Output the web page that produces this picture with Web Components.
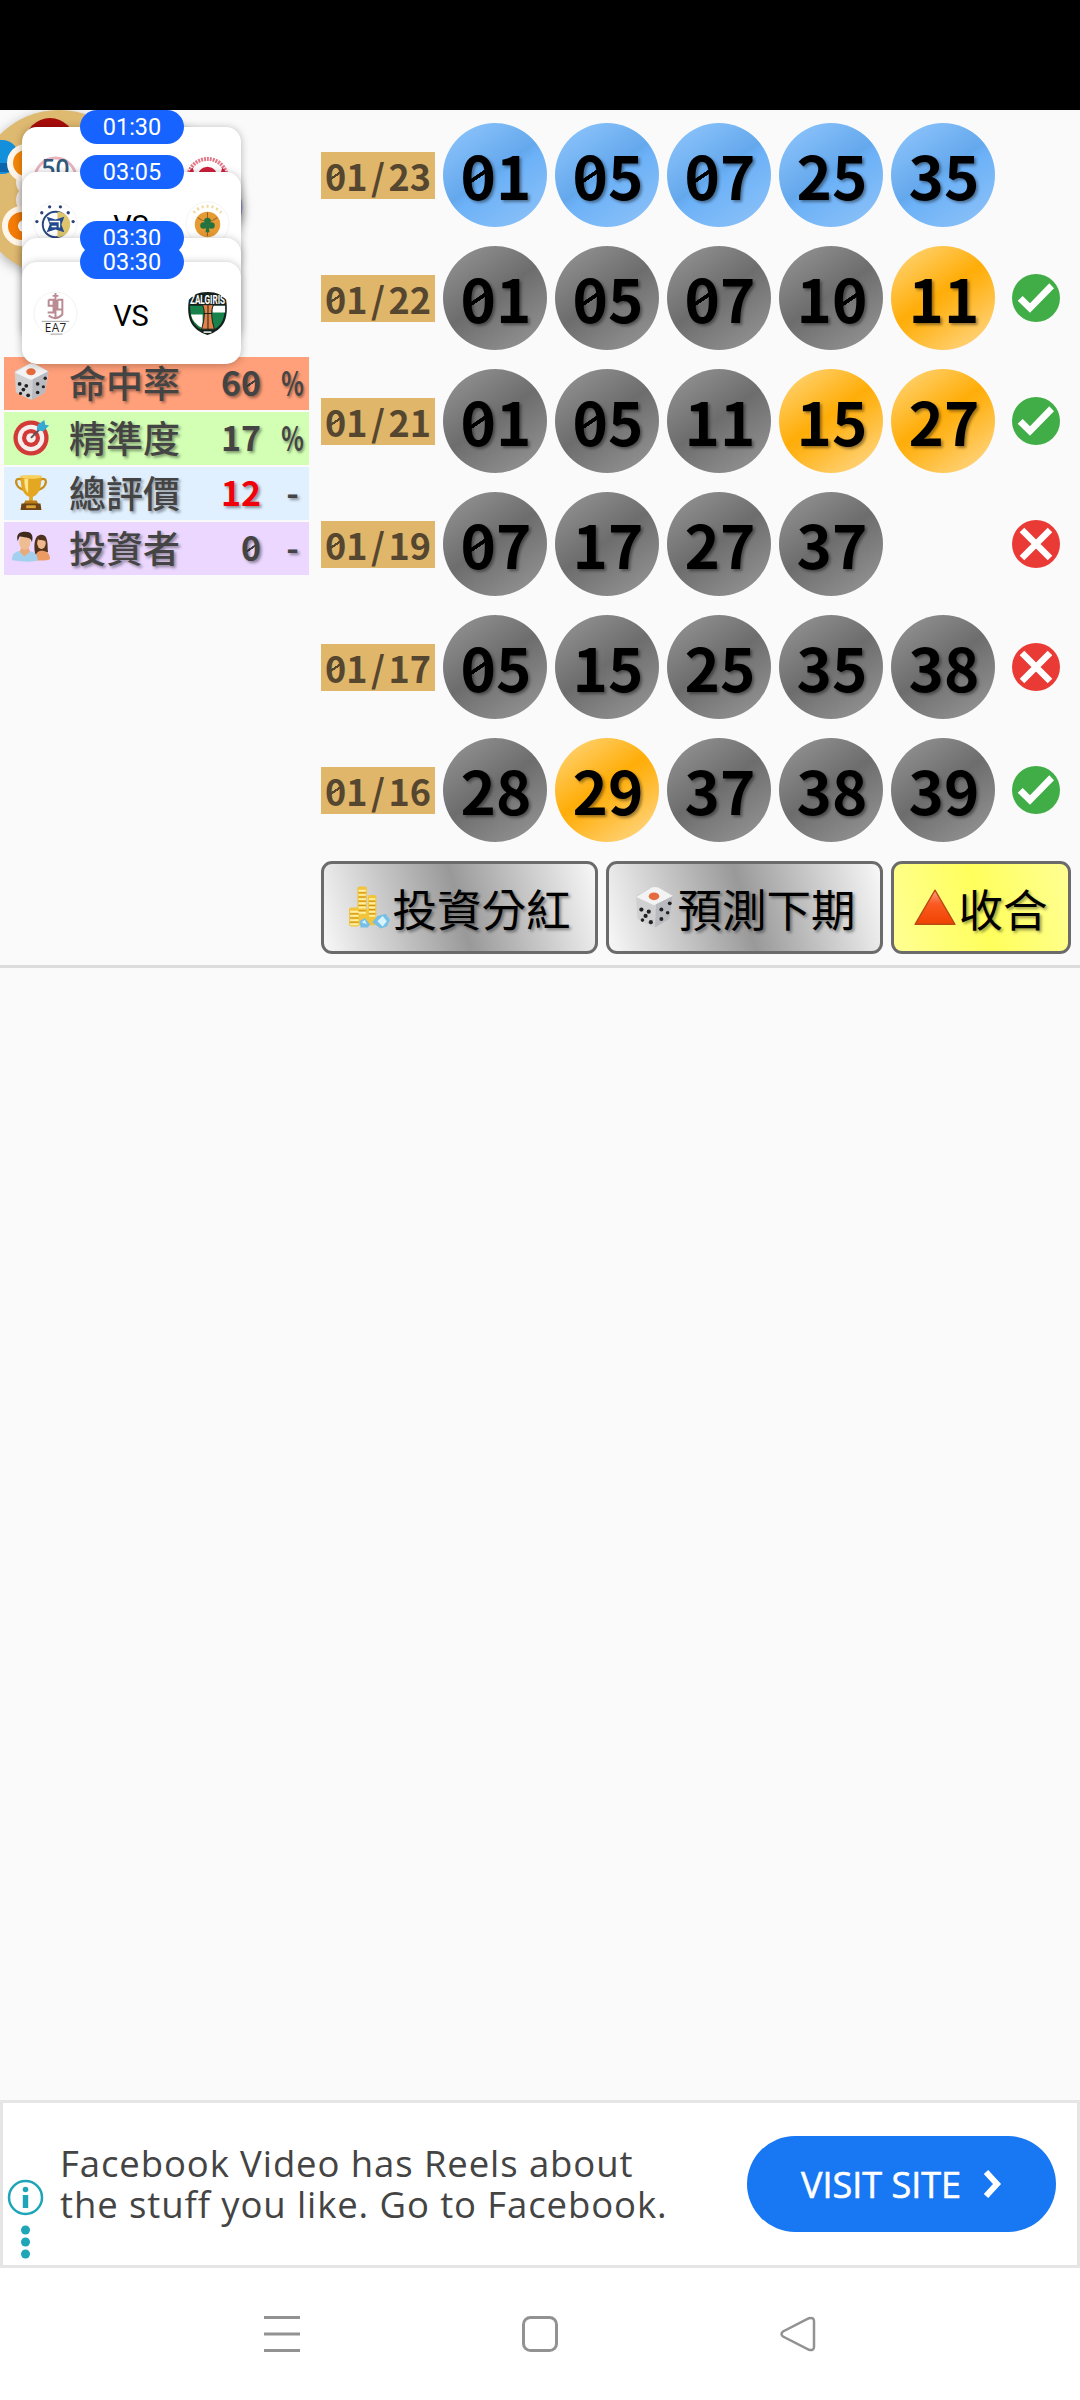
<!DOCTYPE html>
<html lang="zh-Hant">
<head>
<meta charset="utf-8">
<title>539</title>
<style>
body{
    margin:0;
    width:1080px;
    height:2400px;
    display:flex;
    flex-direction:column;
    background:#fafafa;
    overflow:hidden;
    font-family:"Noto Sans CJK TC","Noto Sans",sans-serif;
}
.status{
    height:110px;
    background:#000;
}
main{
    position:relative;
    height:855px;
    display:flex;
    gap:12px;
    border-bottom:3px solid #dcdcdc;
}
.stats{
    width:305px;
    padding:247px 0 0 4px;
    display:flex;
    flex-direction:column;
    gap:2px;
}
.draws{
    flex:1;
    padding:13px 9px 0 0;
    display:flex;
    flex-direction:column;
    gap:19px;
}
.buttons{
    display:flex;
    gap:8px;
}
.space{
    flex:1;
}
</style>
</head>
<body>
<div class="status"></div>
<main>
    <div class="stats">
        <stat-row icon="dice" label="命中率" value="60" unit="%" style="--bg:#ffa07a"></stat-row>
        <stat-row icon="target" label="精準度" value="17" unit="%" style="--bg:#d2ffb4"></stat-row>
        <stat-row icon="cup" label="總評價" value="12" unit="-" style="--bg:#e1f0ff;--num:#f00008"></stat-row>
        <stat-row icon="people" label="投資者" value="0" unit="-" style="--bg:#ebd7ff"></stat-row>
    </div>
    <div class="draws">
        <draw-row date="01/23" balls="01 05 07 25 35" next></draw-row>
        <draw-row date="01/22" balls="01 05 07 10 11*" result="ok"></draw-row>
        <draw-row date="01/21" balls="01 05 11 15* 27*" result="ok"></draw-row>
        <draw-row date="01/19" balls="07 17 27 37" result="no"></draw-row>
        <draw-row date="01/17" balls="05 15 25 35 38" result="no"></draw-row>
        <draw-row date="01/16" balls="28 29* 37 38 39" result="ok"></draw-row>
        <div class="buttons">
            <metal-button icon="coins" style="width:277px">投資分紅</metal-button>
            <metal-button icon="dice" style="width:277px">預測下期</metal-button>
            <metal-button icon="up" style="width:180px;--a:#ffff94;--b:#ffff5c">收合</metal-button>
        </div>
    </div>
    <float-stack></float-stack>
</main>
<div class="space"></div>
<ad-banner>
    Facebook Video has Reels about<br>the stuff you like. Go to Facebook.
    <span slot="action">VISIT SITE</span>
</ad-banner>
<nav-bar></nav-bar>

<script>
const icons={
    dice:`<svg viewBox="0 0 40 40">
        <path d="M3 10Q2 9 4 8L18 1Q21 0 24 1L37 8Q39 9 38 12L35 29Q35 31 33 32L22 38Q20 39 18 38L6 32Q4 31 4 29Z" fill="#d0d0d3"/>
        <path d="M3 10L18 1Q21 0 24 1L38 9L22 17Q20 18 18 17Z" fill="#f3f3f4"/>
        <path d="M22 17L38 9L35 29Q35 31 33 32L21 39Z" fill="#b9babf"/>
        <ellipse cx="20" cy="9.300" rx="5" ry="3.700" fill="#e56a3d"/>
        <g fill="#222"><circle cx="8" cy="22" r="2"/><circle cx="15" cy="24" r="2"/><circle cx="12" cy="28" r="2"/><circle cx="9" cy="32" r="1.700"/><circle cx="17" cy="34" r="2"/><circle cx="35" cy="16" r="1.800"/><circle cx="27" cy="22" r="1.900"/><circle cx="33" cy="25" r="1.700"/><circle cx="27" cy="31" r="1.900"/></g></svg>`,
    target:`<svg viewBox="0 0 40 40">
        <circle cx="20" cy="21" r="18.500" fill="#d23a38"/><circle cx="20" cy="21" r="14" fill="#f7eeee"/><circle cx="20" cy="21" r="9.500" fill="#d23a38"/><circle cx="20" cy="21" r="5" fill="#f7eeee"/>
        <path d="M20 21L31 10" stroke="#555" stroke-width="2"/>
        <path d="M26 13L27 7L34 2L35 7L39 8L33 14Z" fill="#35a9d0"/></svg>`,
    cup:`<svg viewBox="0 0 40 40">
        <path d="M10 7C2 3 2 15 13 18M30 7C38 3 38 15 27 18" fill="none" stroke="#c98f1b" stroke-width="2.500"/>
        <path d="M9 3H31C31 14 29 23 22 25V30H18V25C11 23 9 14 9 3Z" fill="#e3a722"/>
        <path d="M13 6C13 14 14 18 17 21L17 6Z" fill="#ffe58a"/><ellipse cx="20" cy="4" rx="11" ry="2" fill="#f8d261"/>
        <path d="M14 29H26L28 33H12Z" fill="#b97d16"/><path d="M10 32H30L31 39H9Z" fill="#704315"/><rect x="15" y="34" width="10" height="3" fill="#d9a53a"/></svg>`,
    people:`<svg viewBox="0 0 40 40">
        <path d="M25 30C23 22 22 7 31 7C39 7 37 20 38 25L35 27Z" fill="#50321e"/><ellipse cx="31" cy="16" rx="4.500" ry="6" fill="#eeb88c"/><path d="M27 11C29 14 33 12 35 14L35 9L30 7Z" fill="#50321e"/>
        <path d="M24 34C24 26 28 24 31 24C36 24 40 26 40 33Q36 35 24 34Z" fill="#ec9c62"/>
        <path d="M0 34C0 26 4 24 13 24C22 24 27 26 27 34Q20 37 0 34Z" fill="#a4d0f0"/>
        <path d="M8 25L13 30L19 25L17 20H10Z" fill="#e8ab7c"/><ellipse cx="13.500" cy="15" rx="6" ry="8" fill="#f0bd92"/>
        <path d="M6 14C4 6 8 4 14 4C20 4 23 7 21 15C20 10 16 10 8 9Z" fill="#3f2a1b"/></svg>`,
    coins:`<svg viewBox="0 0 40 40">
        <g fill="#f2c43c"><rect x="1" y="20" width="10" height="18" rx="2"/><rect x="9" y="0" width="9" height="37" rx="2"/><rect x="19" y="8" width="8" height="29" rx="2"/><rect x="14" y="22" width="9" height="15" rx="2"/></g>
        <path d="M2 24H10M2 28H10M2 32H10M2 36H10M10 4H17M10 8H17M10 12H17M10 16H17M10 20H17M10 25H17M20 12H26M20 16H26M20 20H26M20 24H26M20 28H26" stroke="#fff0a0" stroke-width="1.800"/>
        <path d="M2 26H10M2 30H10M2 34H10M10 6H17M10 10H17M10 14H17M10 18H17M10 23H17M20 14H26M20 18H26M20 22H26M20 26H26" stroke="#cf9420" stroke-width="1"/>
        <path d="M11 33L16 30L21 36L19 39H12ZM23 34L28 28L36 26L40 32L37 38L31 40Z" fill="#77bfe5"/><path d="M28 33L33 28L37 33L33 38ZM13 34L16 32L18 36Z" fill="#d5f4ff"/></svg>`,
    up:`<svg viewBox="0 0 40 40"><defs><linearGradient id="g" x1="0" y1="0" x2="0" y2="1"><stop offset="0" stop-color="#ffa184"/><stop offset=".4" stop-color="#fb5a22"/><stop offset="1" stop-color="#ef4300"/></linearGradient></defs>
        <path d="M20 3.500L39 36H1Z" fill="url(#g)" stroke="#b94a14" stroke-width="1.300" stroke-linejoin="round"/></svg>`,
    ok:`<svg viewBox="0 0 48 48"><circle cx="24" cy="24" r="24" fill="#40ad46"/><path d="M5.700 26.700L10.700 22L18 29.300L37.300 9.300L42 14.300L18 38.700Z" fill="#fff"/></svg>`,
    no:`<svg viewBox="0 0 48 48"><circle cx="24" cy="24" r="24" fill="#ea3a36"/><path d="M10 10L38 38M38 10L10 38" stroke="#fff" stroke-width="6.500"/></svg>`
}

// the zeros carry a slash
const slashed=`
    .z{
        background:linear-gradient(146deg,transparent 43%,currentColor 44%,currentColor 56%,transparent 57%) center 54%/52% 26% no-repeat;
    }
`
function digits(s){
    return s.replace("/",'<i>|</i>').replace(/0/g,'<span class="z">0</span>').replace("<i>|</i>",'<span class="s">/</span>')
}

class StatRow extends HTMLElement{
    constructor(){
        super()
        this.attachShadow({mode:'open'})
    }
    connectedCallback(){
        this.shadowRoot.innerHTML=`
        <style>
        :host{
            height:53px;
            background:var(--bg);
            display:grid;
            grid-template-columns:54px 135px 67px 1fr;
            align-items:center;
            padding-left:8px;
            color:#444;
            font-size:34px;
            font-weight:700;
            line-height:50px;
            text-shadow:2px 2px 3px rgba(0,0,0,.4);
        }
        :host > *{
            margin-bottom:3px;
        }
        svg{
            width:38px;
            height:38px;
            display:block;
        }
        .label{
            font-size:37px;
            font-weight:500;
            padding-left:3px;
            margin-bottom:3px;
        }
        .value{
            color:var(--num,#444);
            text-align:right;
            padding-right:7px;
            margin-bottom:3px;
        }
        .unit{
            display:flex;
            justify-content:center;
            margin-bottom:3px;
            transform:translateX(4px) scaleX(var(--sx));
        }
        ${slashed}
        </style>
        ${icons[this.getAttribute("icon")]}
        <div class="label">${this.getAttribute("label")}</div>
        <div class="value">${digits(this.getAttribute("value"))}</div>
        <div class="unit" style="--sx:${this.getAttribute("unit")=="%"?.69:1}">${this.getAttribute("unit")}</div>
        `
    }
}

class DrawRow extends HTMLElement{
    constructor(){
        super()
        this.attachShadow({mode:'open'})
    }
    connectedCallback(){
        let kind=this.hasAttribute("next")?"next":""
        let balls=this.getAttribute("balls").split(" ").map(b=>
            `<div class="ball ${b.endsWith("*")?"hit":kind}">${digits(b.replace("*",""))}</div>`).join("")
        this.shadowRoot.innerHTML=`
        <style>
        :host{
            height:104px;
            display:grid;
            grid-template-columns:114px repeat(5,104px) 48px;
            column-gap:8px;
            align-items:center;
            font-weight:700;
        }
        .date{
            height:47px;
            line-height:46px;
            background:#e0b66a;
            color:#554630;
            font-size:36px;
            text-align:center;
            white-space:nowrap;
        }
        .s{
            display:inline-block;
            width:21px;
            text-align:center;
        }
        .ball{
            height:104px;
            line-height:101px;
            border-radius:50%;
            font-size:60px;
            text-align:center;
            text-indent:2px;
            color:#000;
            text-shadow:2px 2px 3px rgba(0,0,0,.4);
            background:linear-gradient(145deg,#8d8d8d 12%,#6d6d6d 48%,#727272 54%,#8f8f8f 88%);
        }
        .next{
            background:linear-gradient(145deg,#87c0fa 12%,#64a8ec 48%,#6cb1f7 54%,#87bff8 88%);
        }
        .hit{
            background:linear-gradient(145deg,#ffce64 12%,#ffad08 46%,#ffb41c 56%,#ffd174 88%);
        }
        svg{
            grid-column:7;
            width:48px;
            height:48px;
            margin-left:9px;
        }
        ${slashed}
        </style>
        <div class="date">${digits(this.getAttribute("date"))}</div>
        ${balls}
        ${icons[this.getAttribute("result")]||""}
        `
    }
}

class MetalButton extends HTMLElement{
    constructor(){
        super()
        this.attachShadow({mode:'open'})
    }
    connectedCallback(){
        this.shadowRoot.innerHTML=`
        <style>
        :host{
            box-sizing:border-box;
            height:93px;
            border:3px solid #6b6b6b;
            border-radius:11px;
            display:flex;
            justify-content:center;
            align-items:center;
            gap:2px;
            font-size:44.500px;
            line-height:88px;
            color:#000;
            white-space:nowrap;
            text-shadow:2px 2px 3px rgba(0,0,0,.4);
            background:linear-gradient(75deg,var(--a,#f8f8f8),var(--b,#999) 50%,var(--a,#f8f8f8));
        }
        svg{
            width:42px;
            height:43px;
        }
        </style>
        ${icons[this.getAttribute("icon")]}
        <slot></slot>
        `
    }
}

const crests={
    fifty:`<circle cx="24" cy="24" r="21" fill="#fff" stroke="#e9b3bd" stroke-width="3"/><text x="24" y="22" font-family="Open Sans" font-weight="600" font-size="25" text-anchor="middle" fill="#315a7d">50</text>`,
    red:`<circle cx="24" cy="24" r="20" fill="#fff" stroke="#e37889" stroke-width="4" stroke-dasharray="2 1"/><path d="M4 24Q4 16 9 13L12 24ZM13 24Q14 13 24 12Q34 13 35 24H29Q29 18 24 18Q18 18 18 24ZM36 24L39 13Q44 16 44 24Z" fill="#d3203e"/>`,
    star:`<circle cx="24" cy="24" r="22" fill="#fff" stroke="#f3f3f3"/><circle cx="24" cy="25" r="13" fill="#fff" stroke="#28477e" stroke-width="2"/><path d="M26 12A13 13 0 0 1 26 38Z" fill="#dcc56c"/>
        <path d="M15 17L24 20L33 17L30 25L33 33L24 30L15 33L18 25Z" fill="#244a8b"/><path d="M18 22H28V28M20 27H25" stroke="#fff" stroke-width="1.500" fill="none"/>
        <g fill="#2c447a"><circle cx="5" cy="22" r="1.700"/><circle cx="10" cy="13" r="1.700"/><circle cx="18" cy="7" r="1.700"/><circle cx="29" cy="7" r="1.700"/><circle cx="37" cy="13" r="1.700"/><circle cx="42" cy="22" r="1.700"/></g><path d="M13 42H19M24 42H28M32 42H35" stroke="#222" stroke-width="1.500"/>`,
    clover:`<circle cx="24" cy="24" r="22" fill="#fff" stroke="#f3f3f3"/><path d="M10 13A18 18 0 0 1 38 13" fill="none" stroke="#f0d998" stroke-width="3" stroke-dasharray="2 3"/><circle cx="24" cy="25" r="13" fill="#e69a32"/><path d="M24 12.500V37M14 18Q24 26 34 18" stroke="#8d602a" fill="none"/>
        <g fill="#24723f"><circle cx="24" cy="21.500" r="3.400"/><circle cx="20" cy="26" r="3.400"/><circle cx="28" cy="26" r="3.400"/><path d="M23 24H25L26 33H22Z"/></g><path d="M8 41H40" stroke="#333" stroke-width="2" stroke-dasharray="3 .6"/>`,
    ea7:`<circle cx="24" cy="24" r="22" fill="#fff" stroke="#f1f1f1"/><path d="M17 10H22V23H16M17 10V16H22M26 10H31V25Q24 32 17 26M26 10V20H31M21 6H27M24 3V29" fill="none" stroke="#ba8b93" stroke-width="2"/><path d="M10 32H38M19 45H31" stroke="#888" stroke-width=".8"/><text x="24" y="43" font-family="Open Sans" font-size="12" text-anchor="middle" fill="#222" textLength="22">EA7</text>`,
    shield:`<path d="M24 2C34 2 38 5 43 10C46 30 40 41 24 46C8 41 2 30 5 10C10 5 14 2 24 2Z" fill="#14211d"/><path d="M6 16H42L41 26Q39 36 31 40H17Q9 36 7 26Z" fill="#17824a"/><path d="M29 16H42V23H29ZM7 25H19V39Q9 34 7 25Z" fill="#fff"/><path d="M19 15H30Q26 24 31 40H18Q23 24 19 15Z" fill="#e48149" stroke="#14211d"/><path d="M24.500 15V40M20 24H29" stroke="#14211d"/>
        <text x="24" y="14.500" font-family="Roboto" font-weight="700" font-size="13" text-anchor="middle" fill="#fff" textLength="36" lengthAdjust="spacingAndGlyphs">ZALGIRIS</text><path d="M20 43H28" stroke="#fff" stroke-width="1.500"/>`
}

class MatchCard extends HTMLElement{
    constructor(){
        super()
        this.attachShadow({mode:'open'})
    }
    connectedCallback(){
        let svg=n=>crests[n]?`<svg viewBox="0 0 48 48">${crests[n]}</svg>`:"<i></i>"
        this.shadowRoot.innerHTML=`
        <style>
        :host{
            position:absolute;
            left:22px;
            top:var(--y);
            width:219px;
            height:102px;
            border-radius:15px;
            background:#fff;
            box-shadow:0 1px 8px rgba(0,0,0,.28);
            display:grid;
            grid-template-columns:48px 1fr 48px;
            align-items:center;
            padding:0 9px 0 10px;
            box-sizing:border-box;
            font-family:Roboto,sans-serif;
            color:#000;
        }
        .time{
            position:absolute;
            left:58px;
            top:-17px;
            width:104px;
            height:34px;
            line-height:35px;
            border-radius:17px;
            background:#1663ff;
            color:#fff;
            font-size:23.500px;
            text-align:center;
        }
        .vs{
            font-size:29px;
            text-align:center;
            padding-top:5px;
            padding-right:2px;
        }
        svg,i{
            width:47px;
            height:47px;
        }
        </style>
        ${svg(this.getAttribute("home"))}<div class="vs">${this.hasAttribute("home")?"VS":""}</div>${svg(this.getAttribute("away"))}
        <div class="time">${this.getAttribute("time")}</div>
        `
    }
}

class FloatStack extends HTMLElement{
    constructor(){
        super()
        this.attachShadow({mode:'open'})
    }
    connectedCallback(){
        this.shadowRoot.innerHTML=`
        <style>
        :host{
            position:absolute;
            left:0;
            top:0;
            width:260px;
            height:260px;
        }
        .seal{
            position:absolute;
            left:0;
            top:0;
            filter:drop-shadow(0 3px 6px rgba(0,0,0,.3));
        }
        </style>
        <svg class="seal" width="260" height="180" viewBox="0 0 260 180">
            <circle cx="59" cy="83" r="83" fill="#deb970"/>
            <circle cx="50" cy="33" r="25" fill="#a80d0b"/><circle cx="2" cy="47" r="17" fill="#138fdb"/>
            <path d="M0 53H18L14 62H0Z" fill="#0c65ab"/>
            <circle cx="31" cy="72" r="15" fill="#f5eee9"/><circle cx="31" cy="90" r="15" fill="#f1e9e5"/>
            <circle cx="26" cy="53" r="16" fill="#f4860a" stroke="#fff5e8" stroke-width="6"/>
            <circle cx="22" cy="116" r="17" fill="#f47b06" stroke="#fff5e8" stroke-width="6"/><circle cx="24" cy="116" r="6" fill="#fff"/>
            <circle cx="214" cy="97" r="28.500" fill="#9c9bd0"/><circle cx="172" cy="35" r="22" fill="#8c84b5"/>
        </svg>
        <match-card time="01:30" home="fifty" away="red" style="--y:17px"></match-card>
        <match-card time="03:05" home="star" away="clover" style="--y:62px"></match-card>
        <match-card time="03:30" style="--y:128px"></match-card>
        <match-card time="03:30" home="ea7" away="shield" style="--y:152px"></match-card>
        `
    }
}

class AdBanner extends HTMLElement{
    constructor(){
        super()
        this.attachShadow({mode:'open'})
    }
    connectedCallback(){
        this.shadowRoot.innerHTML=`
        <style>
        :host{
            box-sizing:border-box;
            height:168px;
            border:3px solid #e5e5e5;
            background:#fff;
            display:flex;
            align-items:center;
            padding-right:21px;
            font-family:"Open Sans",sans-serif;
            color:#444;
        }
        .info{
            width:40px;
            height:84px;
            align-self:flex-end;
            margin-right:17px;
            overflow:visible;
        }
        .text{
            flex:1;
            font-size:36.500px;
            line-height:41px;
            letter-spacing:.900px;
            white-space:nowrap;
        }
        .go{
            width:309px;
            height:96px;
            box-sizing:border-box;
            border-radius:48px;
            background:#1877f2;
            color:#fff;
            font-size:36px;
            -webkit-text-stroke:.6px #fff;
            display:flex;
            align-items:center;
            justify-content:center;
            gap:22px;
            white-space:nowrap;
        }
        </style>
        <svg class="info" viewBox="0 0 40 84"><g fill="#1ea6b8"><circle cx="22.500" cy="8.500" r="2.800"/><path d="M19.800 14H25.200V27H19.800Z"/><circle cx="22.500" cy="49" r="4.500"/><circle cx="22.500" cy="61" r="4.500"/><circle cx="22.500" cy="73" r="4.500"/></g><circle cx="22.500" cy="16.500" r="16.500" fill="none" stroke="#1ea6b8" stroke-width="2.500"/></svg>
        <div class="text"><slot></slot></div>
        <div class="go"><slot name="action"></slot><svg width="19" height="30" viewBox="0 0 19 30"><path d="M3 3L14 15L3 27" fill="none" stroke="#fff" stroke-width="6"/></svg></div>
        `
    }
}

class NavBar extends HTMLElement{
    constructor(){
        super()
        this.attachShadow({mode:'open'})
    }
    connectedCallback(){
        this.shadowRoot.innerHTML=`
        <style>
        :host{
            height:132px;
            background:#fff;
            display:flex;
            justify-content:center;
            align-items:center;
            gap:222px;
        }
        svg{
            width:36px;
            height:36px;
            fill:none;
            stroke:#929292;
            stroke-width:3;
        }
        </style>
        <svg><path d="M0 1.500H36M0 18H36M0 34.500H36"/></svg>
        <svg><rect x="1.500" y="1.500" width="33" height="33" rx="7"/></svg>
        <svg><path d="M29 2.200L3 15.500Q0 18 3 20.500L29 33.800Q34 35 34 31V5Q34 1 29 2.200Z" stroke-width="2.500"/></svg>
        `
    }
}

customElements.define("stat-row",StatRow)
customElements.define("draw-row",DrawRow)
customElements.define("metal-button",MetalButton)
customElements.define("match-card",MatchCard)
customElements.define("float-stack",FloatStack)
customElements.define("ad-banner",AdBanner)
customElements.define("nav-bar",NavBar)
</script>
</body>
</html>
